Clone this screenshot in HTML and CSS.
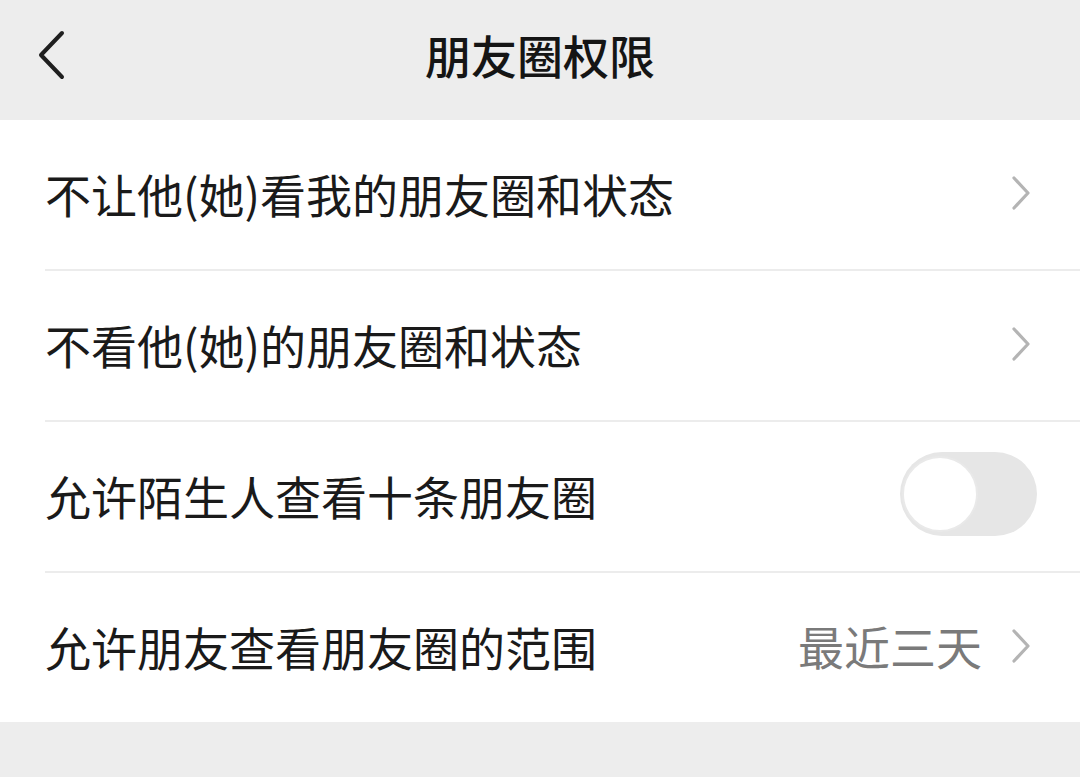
FILE: index.html
```html
<!DOCTYPE html>
<html lang="zh">
<head>
<meta charset="utf-8">
<link rel="stylesheet" href="styles.css">
</head>
<body>
<div class="page">
  <header class="nav">
    <div class="back">
      <svg width="30" height="50" viewBox="0 0 30 50"><path d="M24 3 L3 25 L24 47" fill="none" stroke="#1f1f1f" stroke-width="4" stroke-linecap="round" stroke-linejoin="round"/></svg>
    </div>
    <div class="title">朋友圈权限</div>
  </header>
  <section class="list">
    <div class="row">
      <div class="label">不让他(她)看我的朋友圈和状态</div>
      <div class="right"><svg class="chev" width="22" height="36" viewBox="0 0 22 36"><path d="M4 3 L18 18 L4 33" fill="none" stroke="#b4b4b4" stroke-width="3.2" stroke-linecap="round" stroke-linejoin="round"/></svg></div>
    </div>
    <div class="row">
      <div class="label">不看他(她)的朋友圈和状态</div>
      <div class="right"><svg class="chev" width="22" height="36" viewBox="0 0 22 36"><path d="M4 3 L18 18 L4 33" fill="none" stroke="#b4b4b4" stroke-width="3.2" stroke-linecap="round" stroke-linejoin="round"/></svg></div>
    </div>
    <div class="row">
      <div class="label">允许陌生人查看十条朋友圈</div>
      <div class="right"><div class="toggle"><div class="knob"></div></div></div>
    </div>
    <div class="row last">
      <div class="label">允许朋友查看朋友圈的范围</div>
      <div class="right"><span class="value">最近三天</span><svg class="chev" width="22" height="36" viewBox="0 0 22 36"><path d="M4 3 L18 18 L4 33" fill="none" stroke="#b4b4b4" stroke-width="3.2" stroke-linecap="round" stroke-linejoin="round"/></svg></div>
    </div>
  </section>
</div>
</body>
</html>
```
FILE: styles.css
```css
* { box-sizing: border-box; }
html, body { margin: 0; padding: 0; }
body {
  width: 1080px;
  height: 777px;
  background: #ededed;
  font-family: "Noto Sans CJK SC", "Noto Sans", sans-serif;
  overflow: hidden;
}
.page { width: 1080px; }
.nav {
  height: 120px;
  background: #ededed;
  display: flex;
  align-items: center;
  justify-content: center;
  position: relative;
}
.back {
  position: absolute;
  left: 38px;
  top: 30px;
  width: 30px;
  height: 50px;
}
.back svg { display: block; }
.title {
  font-size: 46px;
  font-weight: 500;
  color: #151515;
  margin-top: -12px;
  letter-spacing: 0;
}
.list {
  background: #ffffff;
  padding-left: 45px;
}
.row {
  height: 151px;
  display: flex;
  align-items: center;
  justify-content: space-between;
  border-bottom: 2px solid #ececec;
  padding-right: 43px;
}
.row.last { border-bottom: none; height: 149px; }
.label {
  font-size: 46px;
  color: #1a1a1a;
  font-weight: 400;
  line-height: 1;
  margin-top: -4px;
}
.right {
  display: flex;
  align-items: center;
}
.chev { display: block; margin-right: 5px; margin-top: -4px; }
.value {
  font-size: 46px;
  color: #7a7a7a;
  line-height: 1;
  margin-right: 28px;
  margin-top: -6px;
}
.toggle {
  width: 137px;
  height: 84px;
  border-radius: 42px;
  background: #e6e6e6;
  display: flex;
  align-items: center;
  padding-left: 2px;
  margin-right: 0;
  margin-top: -6px;
}
.knob {
  width: 76px;
  height: 76px;
  border-radius: 50%;
  background: #ffffff;
  border: 2px solid #e9e9e9;
}
```
